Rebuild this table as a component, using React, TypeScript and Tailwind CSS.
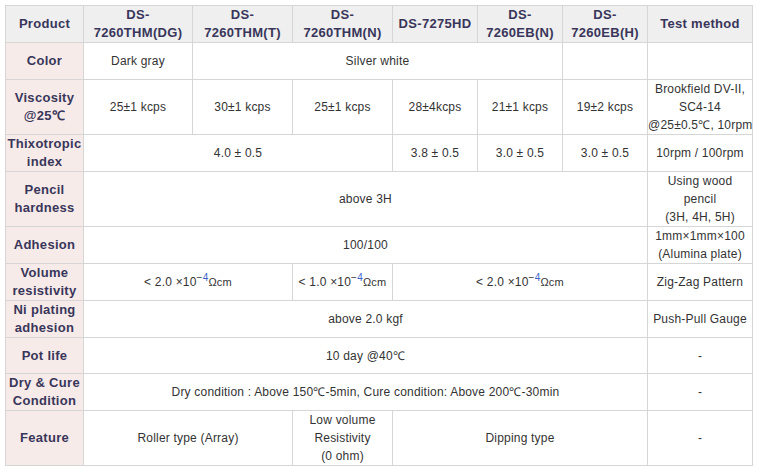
const th = "border border-[#d6d6d6] bg-[#efefef] text-[#39365a] font-bold text-[13px] leading-[18px] tracking-[0.3px] text-center align-middle p-0 whitespace-nowrap";
const rh = "border border-[#d6d6d6] bg-[#f7ebe9] text-[#39365a] font-bold text-[13px] leading-[18px] tracking-[0.3px] text-center align-middle p-0 whitespace-nowrap";
const td = "border border-[#d6d6d6] bg-white text-[#333] text-[12px] leading-[18px] tracking-[0.2px] text-center align-middle p-0 whitespace-nowrap";

function Ohm({ v }: { v: string }) {
  return (
    <span>
      &lt; {v} ×10
      <span className="text-[10px] relative -top-[5px]">
        <span className="text-[#333]">−</span>
        <span className="text-[#3b62c8]">4</span>
      </span>
      <span className="text-[11px]">Ωcm</span>
    </span>
  );
}

export default function App() {
  return (
    <div className="w-[757px] h-[469px] bg-white pt-[5px] pl-[5px]" style={{ fontFamily: '"Liberation Sans", Arial, sans-serif' }}>
      <table className="table-fixed border-collapse w-[747px]">
        <colgroup>
          <col className="w-[78px]" />
          <col className="w-[109px]" />
          <col className="w-[100px]" />
          <col className="w-[100px]" />
          <col className="w-[85px]" />
          <col className="w-[85px]" />
          <col className="w-[85px]" />
          <col className="w-[105px]" />
        </colgroup>
        <tbody>
          <tr className="h-[37px]">
            <td className={th}>Product</td>
            <td className={th}>DS-<br />7260THM(DG)</td>
            <td className={th}>DS-<br />7260THM(T)</td>
            <td className={th}>DS-<br />7260THM(N)</td>
            <td className={th}>DS-7275HD</td>
            <td className={th}>DS-<br />7260EB(N)</td>
            <td className={th}>DS-<br />7260EB(H)</td>
            <td className={th}>Test method</td>
          </tr>
          <tr className="h-[37px]">
            <td className={rh}>Color</td>
            <td className={td}>Dark gray</td>
            <td className={td} colSpan={4}>Silver white</td>
            <td className={td}></td>
            <td className={td}></td>
          </tr>
          <tr className="h-[54px]">
            <td className={rh}>Viscosity<br />@25℃</td>
            <td className={td}>25±1 kcps</td>
            <td className={td}>30±1 kcps</td>
            <td className={td}>25±1 kcps</td>
            <td className={td}>28±4kcps</td>
            <td className={td}>21±1 kcps</td>
            <td className={td}>19±2 kcps</td>
            <td className={td}>Brookfield DV-II,<br />SC4-14<br />@25±0.5℃, 10rpm</td>
          </tr>
          <tr className="h-[37px]">
            <td className={rh}>Thixotropic<br />index</td>
            <td className={td} colSpan={3}>4.0 ± 0.5</td>
            <td className={td}>3.8 ± 0.5</td>
            <td className={td}>3.0 ± 0.5</td>
            <td className={td}>3.0 ± 0.5</td>
            <td className={td}>10rpm / 100rpm</td>
          </tr>
          <tr className="h-[55px]">
            <td className={rh}>Pencil<br />hardness</td>
            <td className={td} colSpan={6}>above 3H</td>
            <td className={td}>Using wood<br />pencil<br />(3H, 4H, 5H)</td>
          </tr>
          <tr className="h-[37px]">
            <td className={rh}>Adhesion</td>
            <td className={td} colSpan={6}>100/100</td>
            <td className={td}>1mm×1mm×100<br />(Alumina plate)</td>
          </tr>
          <tr className="h-[37px]">
            <td className={rh}>Volume<br />resistivity</td>
            <td className={td} colSpan={2}><Ohm v="2.0" /></td>
            <td className={td}><Ohm v="1.0" /></td>
            <td className={td} colSpan={3}><Ohm v="2.0" /></td>
            <td className={td}>Zig-Zag Pattern</td>
          </tr>
          <tr className="h-[37px]">
            <td className={rh}>Ni plating<br />adhesion</td>
            <td className={td} colSpan={6}>above 2.0 kgf</td>
            <td className={td}>Push-Pull Gauge</td>
          </tr>
          <tr className="h-[36px]">
            <td className={rh}>Pot life</td>
            <td className={td} colSpan={6}>10 day @40℃</td>
            <td className={td}>-</td>
          </tr>
          <tr className="h-[37px]">
            <td className={rh}>Dry &amp; Cure<br />Condition</td>
            <td className={td} colSpan={6}>Dry condition : Above 150℃-5min, Cure condition: Above 200℃-30min</td>
            <td className={td}>-</td>
          </tr>
          <tr className="h-[55px]">
            <td className={rh}>Feature</td>
            <td className={td} colSpan={2}>Roller type (Array)</td>
            <td className={td}>Low volume<br />Resistivity<br />(0 ohm)</td>
            <td className={td} colSpan={3}>Dipping type</td>
            <td className={td}>-</td>
          </tr>
        </tbody>
      </table>
    </div>
  );
}
